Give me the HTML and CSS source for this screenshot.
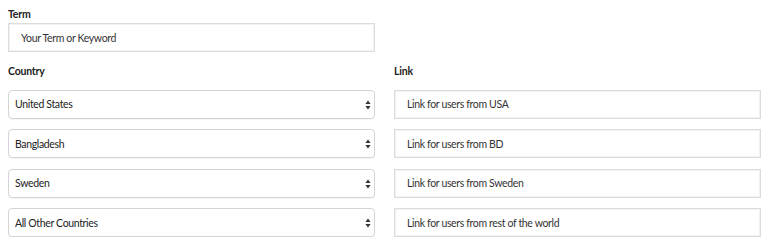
FILE: index.html
```html
<!DOCTYPE html>
<html>
  <head>
    <title>Geo links</title>
    <meta charset="UTF-8" />
    <link rel="stylesheet" href="styles.css">
  </head>

  <body>
    <div class="form">
      <div class="field term_field">
        <label class="field_label" for="term">Term</label>
        <input id="term" class="text_input" type="text" placeholder="Your Term or Keyword" />
      </div>

      <div class="columns">
        <div class="column">
          <div class="field_label">Country</div>
          <div class="select_wrap">
            <select class="country_select">
              <option>United States</option>
            </select>
            <svg class="select_arrows" width="6" height="10" viewBox="0 0 6 10">
              <path d="M3 0.5 L5.6 4 L0.4 4 Z M3 9.5 L5.6 6 L0.4 6 Z" fill="#333" />
            </svg>
          </div>
          <div class="select_wrap">
            <select class="country_select">
              <option>Bangladesh</option>
            </select>
            <svg class="select_arrows" width="6" height="10" viewBox="0 0 6 10">
              <path d="M3 0.5 L5.6 4 L0.4 4 Z M3 9.5 L5.6 6 L0.4 6 Z" fill="#333" />
            </svg>
          </div>
          <div class="select_wrap">
            <select class="country_select">
              <option>Sweden</option>
            </select>
            <svg class="select_arrows" width="6" height="10" viewBox="0 0 6 10">
              <path d="M3 0.5 L5.6 4 L0.4 4 Z M3 9.5 L5.6 6 L0.4 6 Z" fill="#333" />
            </svg>
          </div>
          <div class="select_wrap">
            <select class="country_select">
              <option>All Other Countries</option>
            </select>
            <svg class="select_arrows" width="6" height="10" viewBox="0 0 6 10">
              <path d="M3 0.5 L5.6 4 L0.4 4 Z M3 9.5 L5.6 6 L0.4 6 Z" fill="#333" />
            </svg>
          </div>
        </div>

        <div class="column">
          <div class="field_label">Link</div>
          <input class="text_input" type="text" placeholder="Link for users from USA" />
          <input class="text_input" type="text" placeholder="Link for users from BD" />
          <input class="text_input" type="text" placeholder="Link for users from Sweden" />
          <input class="text_input" type="text" placeholder="Link for users from rest of the world" />
        </div>
      </div>
    </div>
  </body>
</html>
```

FILE: styles.css
```css
body {
  margin: 0;
  background: #fff;
  font-family: "Lato", sans-serif;
  color: #333;
}

.form {
  padding: 7px 0 0 8px;
  width: 753px;
}

.field {
  display: flex;
  flex-direction: column;
}

.term_field {
  width: 367px;
}

.field_label {
  display: block;
  font-size: 10.5px;
  font-weight: 700;
  letter-spacing: -0.2px;
  color: #222;
  line-height: 14px;
  margin-bottom: 2px;
}

.text_input {
  box-sizing: border-box;
  height: 29px;
  width: 100%;
  padding: 0 12px;
  border: 1px solid #dcdcdc;
  box-shadow: inset 0 0 0 1px #f2f2f2;
  border-radius: 0;
  font-family: "Lato", sans-serif;
  font-size: 10.5px;
  letter-spacing: -0.35px;
  color: #333;
  outline: none;
}

.text_input::placeholder {
  color: #333;
  opacity: 1;
}

.columns {
  display: grid;
  grid-template-columns: 367px 367px;
  column-gap: 19px;
  margin-top: 12px;
}

.column {
  display: flex;
  flex-direction: column;
  gap: 10.5px;
}

.column .field_label {
  margin-bottom: 1px;
}

.select_wrap {
  position: relative;
}

.country_select {
  -webkit-appearance: none;
  appearance: none;
  box-sizing: border-box;
  width: 100%;
  height: 29px;
  padding: 0 6px;
  border: 1px solid #d4d4d4;
  border-radius: 4px;
  background: #fff;
  box-shadow: 0 1px 1px rgba(0, 0, 0, 0.04);
  font-family: "Lato", sans-serif;
  font-size: 10.5px;
  letter-spacing: -0.35px;
  color: #222;
  outline: none;
}

.select_arrows {
  position: absolute;
  right: 4px;
  top: 10px;
  pointer-events: none;
}
```
